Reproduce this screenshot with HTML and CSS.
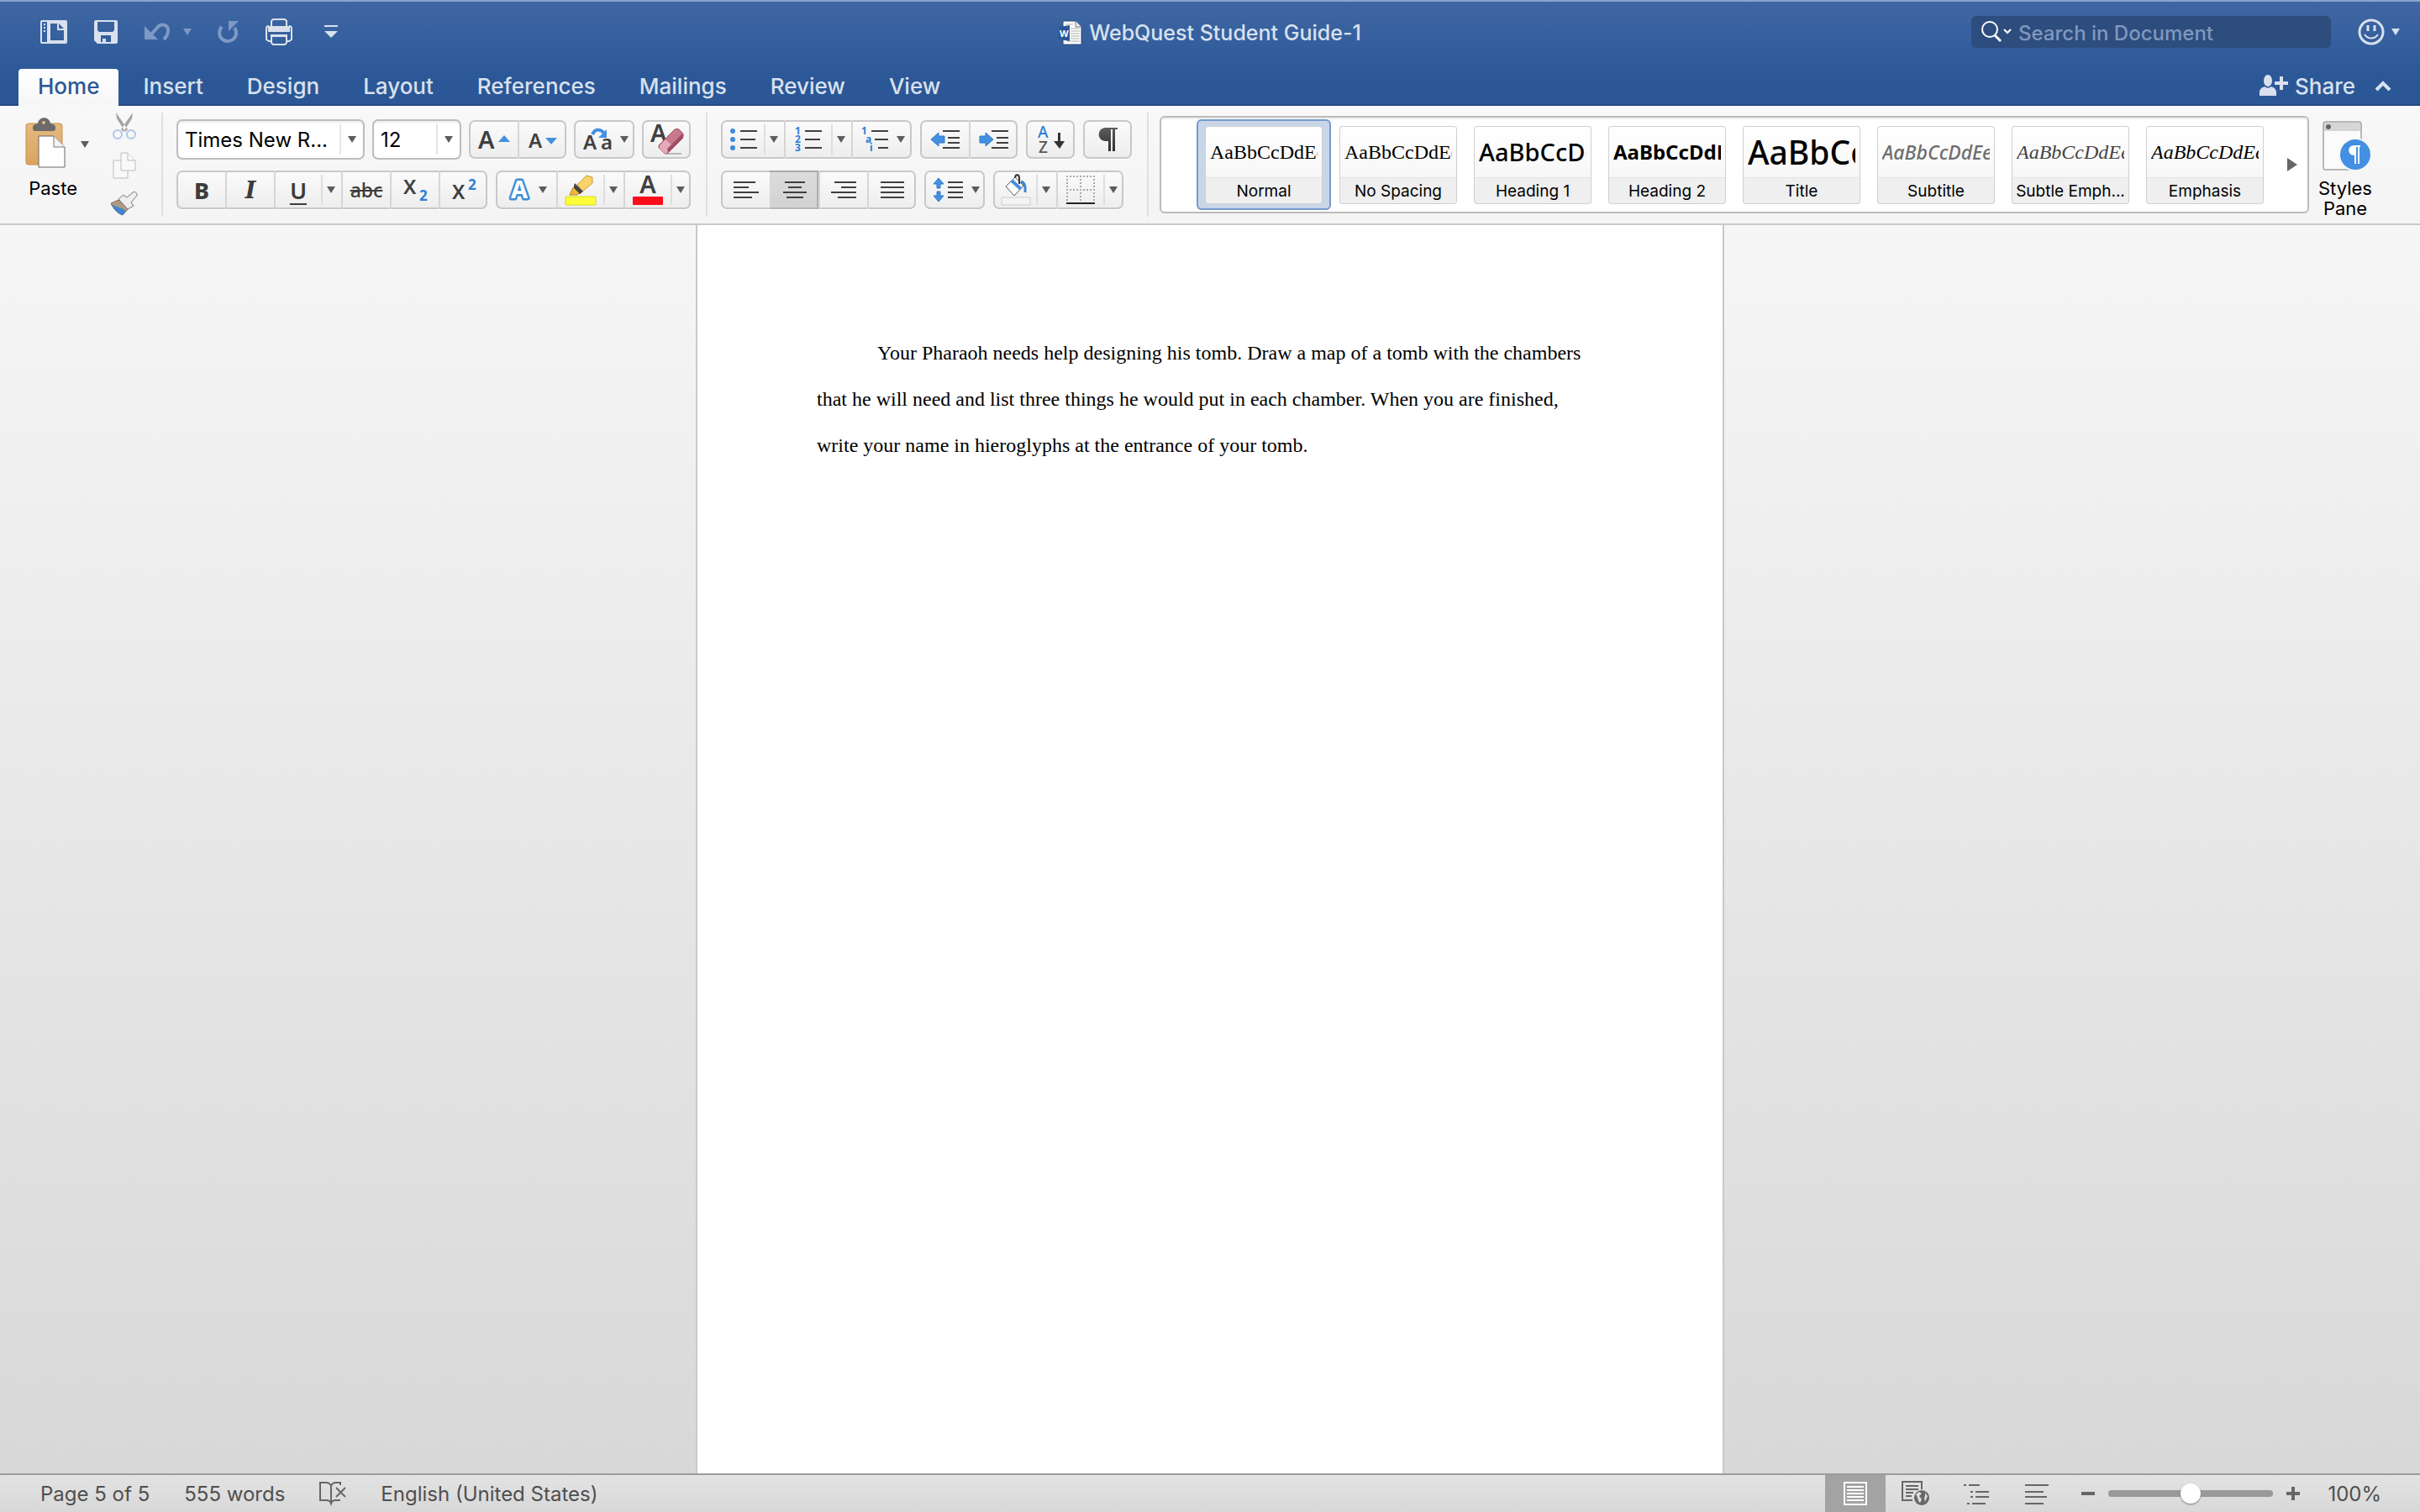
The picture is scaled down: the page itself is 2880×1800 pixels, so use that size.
FILE: index.html
```html
<!DOCTYPE html>
<html lang="en">
<head>
    <meta charset="UTF-8">
    <meta name="viewport" content="width=device-width, initial-scale=1.0">
    <title>WebQuest Student Guide-1</title>
    <link rel="stylesheet" href="styles.css">
</head>
<body>
    <!-- shared shapes -->
    <svg class="sprite" width="0" height="0" aria-hidden="true">
        <defs>
            <linearGradient id="ink" x1="0" y1="0" x2="0" y2="1">
                <stop offset="0" stop-color="#5e5e5e"/>
                <stop offset="1" stop-color="#2c2c2c"/>
            </linearGradient>
            <linearGradient id="board" x1="0" y1="0" x2="0" y2="1">
                <stop offset="0" stop-color="#e6b980"/>
                <stop offset="1" stop-color="#d9a560"/>
            </linearGradient>
        </defs>
        <symbol id="caret" viewBox="0 0 10 8"><path d="M0 0h10L5 8z" fill="currentColor"/></symbol>
    </svg>

    <header class="header">
        <div class="titlebar">
            <div class="quick">
                <button class="plain" aria-label="Sidebar">
                    <svg width="32" height="28" viewBox="0 0 32 28"><path fill="#d9e1ee" fill-rule="evenodd" d="M2 0h28a2 2 0 0 1 2 2v24a2 2 0 0 1-2 2H2a2 2 0 0 1-2-2V2a2 2 0 0 1 2-2zM2 2v24h6V2zM12 4v20h16V12h-8V4zM22 4v6h6z"/><path d="M4 4h2v2H4zM4 8h2v2H4zM4 12h2v2H4z" fill="#d9e1ee"/></svg>
                </button>
                <button class="plain" aria-label="Save">
                    <svg width="28" height="28" viewBox="0 0 28 28"><path fill="#d9e1ee" fill-rule="evenodd" d="M2 0h24a2 2 0 0 1 2 2v24a2 2 0 0 1-2 2H4l-4-4V2a2 2 0 0 1 2-2zM4 2v10l2 2h16l2-2V2zM8 26h2v-4h4v4h6v-8H8z"/></svg>
                </button>
                <span class="undo">
                    <button class="plain dim" aria-label="Undo">
                        <svg width="30" height="22" viewBox="0 0 30 22"><path d="M0 4v16h16z" fill="currentColor"/><path d="M8 14L15 6c4-6 13-4 13 3 0 4-1 7-5 11" fill="none" stroke="currentColor" stroke-width="4"/></svg>
                    </button>
                    <button class="plain dim" aria-label="Undo list"><svg width="10" height="8"><use href="#caret"/></svg></button>
                </span>
                <button class="plain dim" aria-label="Redo">
                    <svg width="24" height="28" viewBox="0 0 24 28"><path d="M4 8a10 10 0 1 0 15 1" fill="none" stroke="currentColor" stroke-width="4"/><path d="M12 1h12L12 13z" fill="currentColor"/></svg>
                </button>
                <button class="plain" aria-label="Print">
                    <svg width="32" height="32" viewBox="0 0 32 32" fill="none" stroke="#d9e1ee" stroke-width="2"><path d="M7 15V3l2-2h14l2 2v12"/><path d="M4 9a3 3 0 0 0-3 3v13l3 2h3v-7h18v7h3l3-2V12a3 3 0 0 0-3-3"/><path d="M4 10h24v5H4z" fill="#d9e1ee"/><path d="M7 21h18v8l-2 2H9l-2-2z"/></svg>
                </button>
                <button class="plain" aria-label="Customize toolbar">
                    <svg width="28" height="16" viewBox="0 0 28 16"><path d="M6 0h16v2H6zM6 7h16l-8 8z" fill="#d9e1ee"/></svg>
                </button>
            </div>
            <h1 class="title">
                <svg width="28" height="30" viewBox="0 0 28 30"><path d="M5 1h15l7 7v21H5z" fill="#fff" stroke="#294674"/><path d="M20 1v7h7" fill="#eee" stroke="#777"/><path d="M8 5h9M14 10h11M14 13h11M14 16h11M14 19h11M14 22h11M10 25h15" stroke="#aaa"/><path d="M0 8l13-2v19L0 23z" fill="#2b5797"/><text x="1" y="20" class="word-mark">W</text></svg>
                WebQuest Student Guide-1
            </h1>
            <div class="title-right">
                <label class="search">
                    <svg width="36" height="26" viewBox="0 0 36 26" fill="none" stroke="#fff" stroke-width="2"><circle cx="10" cy="10" r="9"/><path d="M16 17l7 7" stroke-width="3"/><path d="M27 10l4 4 4-4"/></svg>
                    <input type="search" placeholder="Search in Document" aria-label="Search in Document">
                </label>
                <button class="plain smile" aria-label="Feedback">
                    <svg width="32" height="32" viewBox="0 0 32 32" fill="none" stroke="#d9e1ee" stroke-width="3"><circle cx="16" cy="16" r="14"/><path d="M12 8v7M20 8v7" stroke-width="3"/><path d="M8 19c4 6 12 6 16 0" stroke-width="2"/></svg>
                    <svg width="10" height="8"><use href="#caret"/></svg>
                </button>
            </div>
        </div>
        <nav class="tabs">
            <a class="tab active" href="#home">Home</a>
            <a class="tab" href="#insert">Insert</a>
            <a class="tab" href="#design">Design</a>
            <a class="tab" href="#layout">Layout</a>
            <a class="tab" href="#references">References</a>
            <a class="tab" href="#mailings">Mailings</a>
            <a class="tab" href="#review">Review</a>
            <a class="tab" href="#view">View</a>
            <button class="plain share">
                <svg width="34" height="26" viewBox="0 0 34 26" fill="#d9e1ee"><ellipse cx="10" cy="7" rx="5" ry="7"/><path d="M0 25v-4c0-4 3-6 6-7 3 2 5 2 8 0 3 1 6 3 6 7v4zM24 2h4v6h6v4h-6v6h-4v-6h-6V8h6z"/></svg>
                Share
            </button>
            <button class="plain collapse" aria-label="Collapse ribbon">
                <svg width="20" height="14" viewBox="0 0 20 14"><path d="M2 12l8-8 8 8" fill="none" stroke="#d9e1ee" stroke-width="4"/></svg>
            </button>
        </nav>
    </header>

    <section class="ribbon">
        <div class="section clipboard">
            <div class="paste">
                <button class="big">
                    <svg width="48" height="60" viewBox="0 0 48 60"><rect x="1" y="7" width="43" height="49" rx="3" fill="url(#board)" stroke="#c8914e"/><path d="M9 12c0-4 3-4 6-5 1-9 14-9 15 0 3 1 6 1 6 5 0 3-1 4-3 4H12c-2 0-3-1-3-4z" fill="#6b6b6b"/><circle cx="22" cy="6" r="2" fill="#e6b980"/><path d="M16 22h18l13 13v24H16z" fill="#fff" stroke="#666"/><path d="M34 22v13h13" fill="#f4f4f4" stroke="#777"/></svg>
                    <span>Paste</span>
                </button>
                <button class="plain ink" aria-label="Paste options"><svg width="10" height="8"><use href="#caret"/></svg></button>
            </div>
            <div class="clip-tools">
                <button class="plain" aria-label="Cut">
                    <svg width="28" height="32" viewBox="0 0 28 32"><path d="M4 0l14 20-3 3L5 7zM24 0L10 20l3 3L23 7z" fill="#a3a3a3"/><g fill="none" stroke="#abc8ea" stroke-width="2"><circle cx="6" cy="26" r="5"/><circle cx="22" cy="26" r="5"/></g></svg>
                </button>
                <button class="plain" aria-label="Copy">
                    <svg width="28" height="32" viewBox="0 0 28 32" fill="#f8f8f8" stroke="#bdbdbd"><path d="M1 10h17v21H1z"/><path d="M10 1h8l9 9v12H10z"/><path d="M18 1v9h9"/></svg>
                </button>
                <button class="plain" aria-label="Format painter">
                    <svg width="32" height="28" viewBox="0 0 32 28"><path d="M0 14l9-4 12 10-7 8c-5-1-11-7-14-14z" fill="#b09a82" stroke="#7d6c5c"/><path d="M1 15c5 4 10 3 17 8l-4 5c-5-1-10-6-13-13z" fill="#3f86d2"/><path d="M9 9l6-5 4 3 7-6c3-2 7 2 4 5l-6 7 3 4-7 4z" fill="#eee" stroke="#777"/></svg>
                </button>
            </div>
        </div>

        <div class="section font">
            <div class="row">
                <div class="combo combo-name">
                    <select aria-label="Font"><option>Times New R...</option></select>
                    <span class="combo-drop"><svg width="10" height="8"><use href="#caret"/></svg></span>
                </div>
                <div class="combo combo-size">
                    <select aria-label="Font size"><option>12</option></select>
                    <span class="combo-drop"><svg width="10" height="8"><use href="#caret"/></svg></span>
                </div>
                <div class="group">
                    <button class="tool" aria-label="Increase font size">
                        <svg width="38" height="28" viewBox="0 0 38 28"><text x="0" y="25" class="glyph glyph-lg">A</text><path d="M24 17l7-8 7 8z" fill="#4390e2"/></svg>
                    </button>
                    <button class="tool" aria-label="Decrease font size">
                        <svg width="34" height="28" viewBox="0 0 34 28"><text x="0" y="24" class="glyph">A</text><path d="M20 12h14l-7 8z" fill="#4390e2"/></svg>
                    </button>
                </div>
                <div class="group">
                    <button class="tool menu" aria-label="Change case">
                        <svg width="34" height="30" viewBox="0 0 34 30"><text x="0" y="27" class="glyph">A</text><text x="21" y="27" class="glyph">a</text><path d="M11 9c4-8 11-6 14-1" fill="none" stroke="#4390e2" stroke-width="4"/><path d="M28 3v10H18z" fill="#4390e2"/></svg>
                        <svg width="10" height="8"><use href="#caret"/></svg>
                    </button>
                </div>
                <div class="group">
                    <button class="tool" aria-label="Clear formatting">
                        <svg width="42" height="40" viewBox="0 0 42 40"><text x="1" y="23" class="glyph glyph-lg">A</text><path d="M18 37h20" stroke="#bbb" stroke-width="2"/><path d="M11 27L29 9c2-2 4-2 6-1l4 4c2 2 1 5 0 7L22 36c-1 1-3 1-5 0l-5-5c-1-1-1-3-1-4z" fill="#c9788e" stroke="#9c4a61"/><path d="M12 27l7-7 9 8-7 8c-1 1-3 1-4 0l-5-5z" fill="#e3abb9"/><path d="M39 13c1 2 1 4 0 6L22 36l-1-5z" fill="#a04e66"/></svg>
                    </button>
                </div>
            </div>
            <div class="row">
                <div class="group">
                    <button class="tool text-tool bold">B</button>
                    <button class="tool text-tool italic">I</button>
                    <button class="tool text-tool under">U</button>
                    <button class="drop" aria-label="Underline styles"><svg width="10" height="8"><use href="#caret"/></svg></button>
                    <button class="tool text-tool strike">abc</button>
                    <button class="tool" aria-label="Subscript">
                        <svg width="32" height="32" viewBox="0 0 32 32"><text x="2" y="21" class="glyph">X</text><text x="21" y="29" class="glyph blue glyph-sm">2</text></svg>
                    </button>
                    <button class="tool" aria-label="Superscript">
                        <svg width="32" height="32" viewBox="0 0 32 32"><text x="2" y="27" class="glyph">X</text><text x="21" y="16" class="glyph blue glyph-sm">2</text></svg>
                    </button>
                </div>
                <div class="group">
                    <button class="tool menu" aria-label="Text effects">
                        <svg width="26" height="32" viewBox="0 0 26 32"><text x="13" y="26" class="outlined">A</text></svg>
                        <svg width="10" height="8"><use href="#caret"/></svg>
                    </button>
                    <button class="tool" aria-label="Highlight">
                        <svg width="36" height="36" viewBox="0 0 36 36"><path d="M14 12L25 1l7 2v7L20 20z" fill="#fbd168" stroke="#c59a35"/><path d="M11 10l10 10-4 3H10V13z" fill="#444"/><path d="M9 15l7 7-2 2H5z" fill="#f0b93c" stroke="#b98a26"/><rect x="0" y="26" width="36" height="10" rx="1" fill="#fdfd3a" stroke="#d8d820"/></svg>
                    </button>
                    <button class="drop" aria-label="Highlight colors"><svg width="10" height="8"><use href="#caret"/></svg></button>
                    <button class="tool" aria-label="Font color">
                        <svg width="36" height="36" viewBox="0 0 36 36"><text x="18" y="22" class="glyph glyph-lg mid">A</text><rect x="0" y="26" width="36" height="10" rx="1" fill="#fc0d1b"/></svg>
                    </button>
                    <button class="drop" aria-label="Font colors"><svg width="10" height="8"><use href="#caret"/></svg></button>
                </div>
            </div>
        </div>

        <div class="section paragraph">
            <div class="row">
                <div class="group">
                    <button class="tool narrow" aria-label="Bullets">
                        <svg width="32" height="28" viewBox="0 0 32 28"><g fill="#3d8ae0"><circle cx="3" cy="4" r="3"/><circle cx="3" cy="14" r="3"/><circle cx="3" cy="24" r="3"/></g><path d="M12 4h20M12 14h18M12 24h20" class="line"/></svg>
                    </button>
                    <button class="drop" aria-label="Bullet styles"><svg width="10" height="8"><use href="#caret"/></svg></button>
                    <button class="tool" aria-label="Numbering">
                        <svg width="32" height="32" viewBox="0 0 32 32"><g class="glyph blue tiny"><text x="0" y="10">1</text><text x="0" y="20">2</text><text x="0" y="30">3</text></g><path d="M12 6h20M12 16h18M12 26h20" class="line"/></svg>
                    </button>
                    <button class="drop" aria-label="Numbering styles"><svg width="10" height="8"><use href="#caret"/></svg></button>
                    <button class="tool menu" aria-label="Multilevel list">
                        <svg width="32" height="32" viewBox="0 0 32 32"><g class="glyph blue tiny"><text x="0" y="10">1</text><text x="5" y="20">a</text><text x="10" y="30">i</text></g><path d="M12 6h20M16 16h16M20 26h12" class="line"/></svg>
                        <svg width="10" height="8"><use href="#caret"/></svg>
                    </button>
                </div>
                <div class="group">
                    <button class="tool" aria-label="Decrease indent">
                        <svg width="36" height="28" viewBox="0 0 36 28"><path d="M15 4h20M21 12h14M21 18h14M15 24h20" class="line"/><path d="M1 14l9-8v4h7v8h-7v4z" fill="#4390e2" stroke="#2f78c8"/></svg>
                    </button>
                    <button class="tool" aria-label="Increase indent">
                        <svg width="36" height="28" viewBox="0 0 36 28"><path d="M15 4h20M21 12h14M21 18h14M15 24h20" class="line"/><path d="M17 14L8 6v4H1v8h7v4z" fill="#4390e2" stroke="#2f78c8"/></svg>
                    </button>
                </div>
                <div class="group">
                    <button class="tool" aria-label="Sort">
                        <svg width="34" height="36" viewBox="0 0 34 36"><text x="1" y="16" class="sort blue">A</text><text x="2" y="34" class="sort">Z</text><path d="M25 10h3v10h5l-6 9-7-9h5z" fill="#333"/></svg>
                    </button>
                </div>
                <div class="group">
                    <button class="tool" aria-label="Show marks">
                        <svg width="22" height="28" viewBox="0 0 22 28"><path d="M8 0h14v2h-3v26h-3V2h-2v26h-3V16H8C-3 16-3 0 8 0z" fill="url(#ink)"/></svg>
                    </button>
                </div>
            </div>
            <div class="row">
                <div class="group">
                    <button class="tool" aria-label="Align left">
                        <svg width="30" height="22" viewBox="0 0 30 22"><path d="M0 2h26M0 8h18M0 14h30M0 20h22" class="line"/></svg>
                    </button>
                    <button class="tool pressed" aria-label="Center">
                        <svg width="28" height="22" viewBox="0 0 28 22"><path d="M2 2h24M6 8h16M0 14h28M4 20h20" class="line"/></svg>
                    </button>
                    <button class="tool" aria-label="Align right">
                        <svg width="30" height="22" viewBox="0 0 30 22"><path d="M4 2h26M12 8h18M0 14h30M8 20h22" class="line"/></svg>
                    </button>
                    <button class="tool" aria-label="Justify">
                        <svg width="28" height="22" viewBox="0 0 28 22"><path d="M0 2h28M0 8h28M0 14h28M0 20h28" class="line"/></svg>
                    </button>
                </div>
                <div class="group">
                    <button class="tool menu" aria-label="Line spacing">
                        <svg width="36" height="30" viewBox="0 0 36 30"><path d="M7 1l6 7H9v5H5V8H1zM7 29l6-7H9v-5H5v5H1z" fill="#4390e2" stroke="#2f78c8"/><path d="M18 6h18M18 12h18M18 18h18M18 24h18" class="line"/></svg>
                        <svg width="10" height="8"><use href="#caret"/></svg>
                    </button>
                </div>
                <div class="group">
                    <button class="tool narrow" aria-label="Shading">
                        <svg width="36" height="38" viewBox="0 0 36 38"><path d="M6 15L17 4l10 10-11 12z" fill="#fff" stroke="#555"/><path d="M13 8l11 10" stroke="#4390e2" stroke-width="4"/><path d="M24 9c4 1 6 4 5 13" fill="none" stroke="#3a83d6" stroke-width="3"/><path d="M17 5c0-5 5-5 5 0v7" fill="none" stroke="#333" stroke-width="2"/><rect x="1" y="28" width="34" height="9" rx="1" fill="#f3f3f3" stroke="#ccc"/></svg>
                    </button>
                    <button class="drop" aria-label="Shading colors"><svg width="10" height="8"><use href="#caret"/></svg></button>
                    <button class="tool" aria-label="Borders">
                        <svg width="34" height="34" viewBox="0 0 34 34"><path d="M0 1h34M0 17h34M1 0v31M17 0v31M33 0v31" fill="none" stroke="#aaa" stroke-width="2" stroke-dasharray="2 2"/><path d="M0 33h34" stroke="#222" stroke-width="2"/></svg>
                    </button>
                    <button class="drop" aria-label="Border styles"><svg width="10" height="8"><use href="#caret"/></svg></button>
                </div>
            </div>
        </div>

        <div class="section styles">
            <div class="gallery">
                <div class="tiles">
                    <button class="tile selected"><span class="preview serif">AaBbCcDdEe</span><span class="name">Normal</span></button>
                    <button class="tile"><span class="preview serif">AaBbCcDdEe</span><span class="name">No Spacing</span></button>
                    <button class="tile"><span class="preview heading1">AaBbCcDdEe</span><span class="name">Heading 1</span></button>
                    <button class="tile"><span class="preview heading2">AaBbCcDdEe</span><span class="name">Heading 2</span></button>
                    <button class="tile"><span class="preview big-title">AaBbCcDdEe</span><span class="name">Title</span></button>
                    <button class="tile"><span class="preview subtitle">AaBbCcDdEe</span><span class="name">Subtitle</span></button>
                    <button class="tile"><span class="preview serif subtle">AaBbCcDdEe</span><span class="name">Subtle Emph...</span></button>
                    <button class="tile"><span class="preview serif emphasis">AaBbCcDdEe</span><span class="name">Emphasis</span></button>
                </div>
                <button class="plain" aria-label="More styles">
                    <svg width="12" height="16" viewBox="0 0 12 16"><path d="M0 0l12 8-12 8z" fill="#666"/></svg>
                </button>
            </div>
            <button class="big pane">
                <svg width="58" height="60" viewBox="0 0 58 60"><rect x="3" y="1" width="45" height="57" rx="2" fill="#fbfbfb" stroke="#777"/><path d="M4 2h43v10H4z" fill="#d6d6d6"/><circle cx="9" cy="7" r="3" fill="#666"/><circle cx="41" cy="40" r="20" fill="#f6f6f6"/><circle cx="41" cy="40" r="18" fill="#4390e2"/><path d="M40 29h7v2h-1v20h-2V31h-2v20h-2V41c-9 0-9-12 0-12z" fill="#fff"/></svg>
                Styles Pane
            </button>
        </div>
    </section>

    <main class="canvas">
        <article class="page">
            <p>Your Pharaoh needs help designing his tomb. Draw a map of a tomb with the chambers that he will need and list three things he would put in each chamber. When you are finished, write your name in hieroglyphs at the entrance of your tomb.</p>
        </article>
    </main>

    <footer class="status">
        <span>Page 5 of 5</span>
        <span>555 words</span>
        <button class="plain" aria-label="Proofing">
            <svg width="32" height="28" viewBox="0 0 32 28" fill="none" stroke="#666" stroke-width="2"><path d="M14 26V5c-1-3-3-4-6-4H1v21h8c3 0 4 1 5 4 1-3 2-4 5-4h6M14 5c1-3 3-4 6-4h5v3"/><path d="M20 7l11 11M31 7L20 18"/></svg>
        </button>
        <span class="language">English (United States)</span>
        <div class="views">
            <button class="view current" aria-label="Print layout">
                <svg width="28" height="28" viewBox="0 0 28 28" fill="none" stroke="#fff" stroke-width="2"><path d="M1 1h26v26H1zM4 6h20M4 10h20M4 14h20M4 18h20M4 22h20"/></svg>
            </button>
            <button class="view" aria-label="Web layout">
                <svg width="34" height="30" viewBox="0 0 34 30" fill="none" stroke="#666" stroke-width="2"><path d="M13 23H1V1h23v9M5 6h15M5 10h15M5 14h9M5 18h7"/><circle cx="24" cy="20" r="9" fill="#666" stroke="none"/><path d="M17 16l4-3 3 2-3 3 3 4-2 4c-3-2-2-6-5-10zM28 14l3 4-3 7-1-5 1-2z" fill="#ddd" stroke="none"/></svg>
            </button>
            <button class="view" aria-label="Outline">
                <svg width="30" height="28" viewBox="0 0 30 28"><path d="M0 4h3M6 4h13M8 12h3M14 12h16M8 18h3M14 18h16M4 26h3M10 26h16" stroke="#666" stroke-width="2"/></svg>
            </button>
            <button class="view" aria-label="Draft">
                <svg width="28" height="28" viewBox="0 0 28 28"><path d="M0 4h28M0 12h22M0 18h26M0 26h22" stroke="#666" stroke-width="2"/></svg>
            </button>
        </div>
        <div class="zoom">
            <button class="plain" aria-label="Zoom out"><svg width="16" height="16" viewBox="0 0 16 16"><path d="M0 8h16" stroke="#666" stroke-width="4"/></svg></button>
            <input type="range" min="0" max="200" value="100" aria-label="Zoom">
            <button class="plain" aria-label="Zoom in"><svg width="16" height="16" viewBox="0 0 16 16"><path d="M0 8h16M8 0v16" stroke="#666" stroke-width="4"/></svg></button>
        </div>
        <span class="percent">100%</span>
    </footer>
</body>
</html>
```
FILE: styles.css
```css
* {
    box-sizing: border-box;
}

body {
    margin: 0;
    min-height: 100vh;
    display: flex;
    flex-direction: column;
    font-family: "Inter", "Liberation Sans", sans-serif;
    font-size: 24px;
    color: #000;
    background: #d8d8d8;
}

button {
    font: inherit;
    color: inherit;
    border: none;
    background: none;
    padding: 0;
}

svg {
    display: block;
    flex: none;
    overflow: visible;
}

.sprite {
    position: absolute;
}

.plain {
    display: flex;
    align-items: center;
}

.ink {
    color: #5c5c5c;
}

/* blue header */
.header {
    border-top: 2px solid #8ba5cb;
    background: linear-gradient(#3f67a3, #2b5797 75%);
    color: #d9e1ee;
}

.titlebar {
    display: grid;
    grid-template-columns: 1fr auto 1fr;
    align-items: center;
    height: 72px;
    padding: 0 24px 0 48px;
}

.quick {
    display: flex;
    align-items: center;
    gap: 32px;
}

.undo {
    display: flex;
    gap: 16px;
}

.dim {
    color: #7d99c4;
}

.title {
    display: flex;
    align-items: center;
    gap: 8px;
    margin: 0 0 0 -24px;
    padding-top: 2px;
    font-size: 25px;
    font-weight: 500;
    line-height: 34px;
}

.word-mark {
    font: bold 11px "Open Sans", sans-serif;
    fill: #fff;
}

.title-right {
    display: flex;
    justify-content: flex-end;
    align-items: center;
    gap: 32px;
}

.search {
    display: flex;
    align-items: center;
    gap: 8px;
    width: 428px;
    height: 38px;
    padding: 0 12px;
    border-radius: 6px;
    background: #2c4d7e;
}

.search input {
    flex: 1;
    min-width: 0;
    border: none;
    padding: 2px 0 0;
    background: none;
    font: 500 24px "Inter", sans-serif;
    color: #fff;
}

.search input::placeholder {
    color: #8098bd;
}

.smile {
    gap: 8px;
}

.tabs {
    display: flex;
    align-items: flex-start;
    height: 52px;
    padding: 8px 34px 0 19px;
    box-shadow: inset 0 -2px #264b82;
}

.tab {
    margin: 0 3px;
    padding: 0 23px;
    height: 44px;
    line-height: 42px;
    font-size: 26px;
    font-weight: 500;
    color: #d9e1ee;
    text-decoration: none;
}

.tab.active {
    color: #2b5797;
    background: linear-gradient(#fff, #f6f6f6);
    border-radius: 4px 4px 0 0;
}

.share,
.collapse {
    height: 40px;
}

.share {
    gap: 8px;
    margin-left: auto;
    margin-right: 23px;
    font-size: 26px;
    font-weight: 500;
}

/* ribbon */
.ribbon {
    display: flex;
    height: 142px;
    padding: 8px 0;
    background: linear-gradient(#f8f8f8, #f4f4f4);
    border-bottom: 2px solid #cacaca;
}

.section {
    display: flex;
    border-right: 2px solid #e0e0e0;
}

.clipboard {
    gap: 26px;
    width: 194px;
    padding-left: 30px;
}

.paste {
    display: flex;
    gap: 4px;
}

.paste .plain {
    height: 76px;
}

.big {
    display: flex;
    flex-direction: column;
    align-items: center;
    gap: 12px;
    padding-top: 6px;
    font-size: 22px;
    line-height: 24px;
}

.paste .big {
    width: 62px;
    align-items: flex-start;
}

.paste .big span {
    align-self: flex-end;
}

.clip-tools {
    display: flex;
    flex-direction: column;
    justify-content: space-between;
    align-items: center;
    padding-bottom: 2px;
}

.font,
.paragraph {
    flex-direction: column;
    gap: 13px;
    padding: 8px 18px 0 16px;
}

.row {
    display: flex;
    align-items: center;
    gap: 10px;
}

.font .row:first-child {
    gap: 9px;
}

.row:first-child {
    height: 48px;
}

.combo {
    display: grid;
    height: 48px;
    border: 2px solid #bdbdbd;
    border-radius: 7px;
    background: #fff;
    box-shadow: inset 0 2px 2px #ececec;
}

.combo-name {
    width: 224px;
}

.combo-size {
    width: 106px;
}

.combo select,
.combo-drop {
    grid-area: 1 / 1;
}

.combo select {
    appearance: none;
    border: none;
    background: none;
    padding: 0 28px 0 8px;
    font: 24px "Inter", sans-serif;
    color: #000;
}

.combo-drop {
    display: flex;
    align-items: center;
    justify-self: end;
    margin: 4px 0;
    padding: 0 8px;
    border-left: 2px solid #e4e4e4;
    color: #5c5c5c;
    pointer-events: none;
}

.group {
    display: flex;
    height: 46px;
    border-radius: 7px;
    background: linear-gradient(#fbfbfb, #ededed);
    box-shadow: inset 0 0 0 2px #c8c8c8, 0 1px 1px #fff;
}

.tool,
.drop {
    display: flex;
    align-items: center;
    justify-content: center;
}

.tool {
    width: 58px;
    padding-left: 2px;
}

.tool:has(+ .drop) {
    width: 56px;
}

.tool + .tool,
.drop + .tool {
    box-shadow: inset 2px 0 #d6d6d6;
}

.tool.menu {
    width: 72px;
    gap: 10px;
    padding-left: 4px;
    color: #5c5c5c;
}

.tool.narrow {
    width: 51px;
}

.drop {
    width: 24px;
    margin: 5px 0;
    box-shadow: inset 2px 0 #dedede;
    color: #5c5c5c;
}

.tool.pressed {
    background: linear-gradient(#dcdcdc, #d2d2d2);
    box-shadow: inset 0 2px #aaa, inset -2px 0 #b0b0b0, inset 0 -2px #b8b8b8;
}

.text-tool {
    font: 600 27px "Noto Sans", sans-serif;
    color: #3c3c3c;
}

.bold {
    font-weight: 800;
}

.italic {
    font-family: "DejaVu Serif", serif;
    font-style: italic;
    font-weight: bold;
}

.under {
    text-decoration: underline;
    text-decoration-thickness: 2px;
    text-underline-offset: 5px;
}

.strike {
    font-size: 23px;
    font-weight: 500;
    text-decoration: line-through;
    text-decoration-thickness: 2px;
}

.glyph {
    font: 600 24px "Noto Sans", sans-serif;
    fill: #404040;
}

.glyph-lg {
    font-size: 29px;
}

.glyph-sm {
    font-size: 17px;
    font-weight: bold;
}

.tiny {
    font-size: 12px;
    font-weight: bold;
}

.sort {
    font: 500 19px "Noto Sans", sans-serif;
    fill: #555;
}

.blue {
    fill: #2f7ed6;
}

.mid {
    text-anchor: middle;
}

.outlined {
    font: bold 29px "Noto Sans", sans-serif;
    text-anchor: middle;
    fill: #fff;
    stroke: #3d8fd6;
    stroke-width: 5px;
    stroke-linejoin: round;
    paint-order: stroke;
}

.line {
    fill: none;
    stroke: #404040;
    stroke-width: 2px;
}

/* style gallery */
.styles {
    flex: 1;
    min-width: 0;
    border: none;
    padding: 0 46px 0 13px;
}

.gallery {
    flex: 1;
    min-width: 0;
    display: flex;
    align-items: center;
    justify-content: space-between;
    height: 116px;
    margin-top: 4px;
    padding: 0 12px 0 42px;
    border: 2px solid #bbb;
    border-radius: 6px;
    background: #fff;
    box-shadow: inset 0 2px 2px #eee;
}

.tiles {
    display: flex;
}

.tile {
    display: flex;
    flex-direction: column;
    width: 160px;
    height: 108px;
    padding: 8px 10px;
    border-radius: 6px;
}

.tile.selected {
    background: #c9d6e8;
    box-shadow: inset 0 0 0 2px #769bca;
}

.preview,
.name {
    width: 100%;
    border: 1px solid #cfcfcf;
}

/* sample text is cut at the padding, not at the tile edge */
.preview {
    height: 62px;
    padding: 0 5px;
    border-bottom-color: #e4e4e4;
    border-radius: 4px 4px 0 0;
    line-height: 60px;
    white-space: nowrap;
    overflow: clip;
    overflow-clip-margin: content-box;
    text-align: left;
    background: linear-gradient(#fff, #f7f7f7);
}

.name {
    height: 31px;
    border-top: none;
    border-radius: 0 0 4px 4px;
    font-size: 19px;
    line-height: 31px;
    background: #efefef;
    white-space: nowrap;
}

.serif {
    font-family: "Times New Roman", "Liberation Serif", serif;
    font-size: 24px;
}

.heading1,
.heading2,
.big-title,
.subtitle {
    font-family: "Trebuchet MS", "Noto Sans", sans-serif;
}

.heading1 {
    font-size: 29px;
    font-weight: 500;
}

.heading2 {
    font-size: 24px;
    font-weight: bold;
}

.big-title {
    font-size: 39px;
    font-weight: 500;
}

.subtitle {
    font-size: 23px;
    font-style: italic;
    font-weight: 500;
    color: #6e6e6e;
}

.subtle {
    font-style: italic;
    color: #444;
}

.emphasis {
    font-style: italic;
}

.pane {
    width: 86px;
    padding: 10px 4px 0;
    gap: 8px;
}

/* document */
.canvas {
    flex: 1;
    display: flex;
    justify-content: center;
    background: linear-gradient(#f6f6f6, #d8d8d8);
}

.page {
    width: 1224px;
    padding: 125px 142px;
    background: #fff;
    border: solid #c8c8c8;
    border-width: 0 2px;
    font-family: "Times New Roman", "Liberation Serif", serif;
    font-size: 24px;
    line-height: 55px;
}

.page p {
    margin: 0;
    text-indent: 72px;
}

/* status bar */
.status {
    display: flex;
    align-items: center;
    gap: 41px;
    height: 46px;
    padding: 0 46px 0 48px;
    border-top: 2px solid #9c9c9c;
    background: linear-gradient(#e3e3e3, #d8d8d8);
    color: #4f4f4f;
    font-size: 24px;
}

.views {
    display: flex;
    align-self: stretch;
    margin-left: auto;
}

.view {
    display: flex;
    align-items: center;
    justify-content: center;
    width: 72px;
}

.view.current {
    background: #a3a3a3;
}

.zoom {
    display: flex;
    align-items: center;
    gap: 16px;
    margin: 0 -8px 0 -24px;
}

.zoom input {
    appearance: none;
    width: 196px;
    height: 8px;
    margin: 0;
    border-radius: 4px;
    background: #999;
}

.zoom input::-webkit-slider-thumb {
    appearance: none;
    width: 24px;
    height: 24px;
    border-radius: 50%;
    background: #fff;
    box-shadow: 0 1px 2px #777;
}
```
